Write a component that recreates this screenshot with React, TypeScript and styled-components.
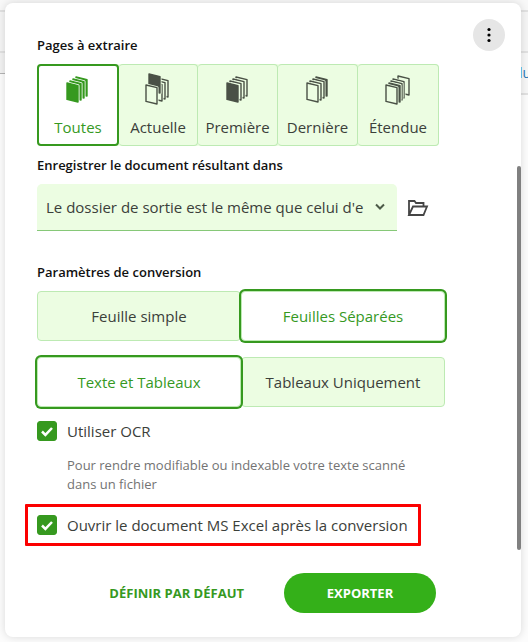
import React from "react";
import styled, { createGlobalStyle, css } from "styled-components";

const green = "#36991f";
const mint = "#ecfde2";
const mintEdge = "#bdeab3";
const ink = "#3b403a";
const sans = '"Open Sans", "Noto Sans", sans-serif';

const GlobalStyle = createGlobalStyle`
  *, *::before, *::after { box-sizing: border-box; }
  body { margin: 0; background: #fcfcfc; font-family: ${sans}; color: ${ink}; }
  button, select, input { font: inherit; color: inherit; }
`;

const Screen = styled.div`
  display: grid;
  min-height: 100vh;
  overflow: hidden;
  > * { grid-area: 1 / 1; }
`;

const Backdrop = styled.div`
  display: flex;
  flex-direction: column;
  background: #fcfcfc;
`;

const Bar = styled.div<{ $height: number; $tone: string }>`
  height: ${(p) => p.$height}px;
  background: ${(p) => p.$tone};
  border-bottom: 2px solid #e1e1e1;
`;

const SplitBar = styled.div`
  display: flex;
  align-items: flex-start;
`;

const LeftPane = styled.div`
  flex: 1;
  height: 21px;
  background: #f2f2f2;
  border-bottom: 1px solid #b4b4b4;
`;

const RightPane = styled.div`
  flex: 1;
  height: 42px;
  background: #f7f7f7;
  border-bottom: 2px solid #e1e1e1;
  direction: rtl;
  font-size: 14px;
  line-height: 40px;
  color: #2a7ab8;
  span { margin-right: -3px; }
`;

const Dialog = styled.main`
  display: grid;
  grid-template-columns: 1fr 4px;
  margin: 3px 7px 5px 5px;
  background: #fff;
  border-radius: 8px;
  box-shadow: 0 0 8px rgba(0, 0, 0, 0.14);
`;

const Body = styled.div`
  display: flex;
  flex-direction: column;
  padding: 16px 12px 24px 32px;
`;

const Top = styled.div`
  display: flex;
  justify-content: space-between;
  align-items: flex-start;
`;

const PageSection = styled.section`
  flex: 0 1 402px;
  padding-top: 16px;
`;

const Section = styled.section<{ $gap: number }>`
  max-width: 408px;
  margin-top: ${(p) => p.$gap}px;
`;

const Heading = styled.h2`
  display: block;
  margin: 0 0 9px;
  font-size: 13px;
  font-weight: 600;
  line-height: 20px;
  color: #111;
`;

const MenuButton = styled.button`
  display: grid;
  place-items: center;
  flex: none;
  width: 32px;
  height: 32px;
  padding: 0;
  border: 0;
  border-radius: 50%;
  background: #e6e6e6;
`;

const Tabs = styled.div`
  display: grid;
  grid-template-columns: 82fr 79fr 80fr 80fr 81fr;
  background: ${mint};
  border-radius: 4px;
`;

const Tab = styled.button<{ $on?: boolean }>`
  display: flex;
  flex-direction: column;
  align-items: center;
  justify-content: space-between;
  height: 82px;
  padding: 8px 0 7px;
  border: 1px solid ${mintEdge};
  border-left-width: 0;
  border-radius: 4px;
  background: transparent;
  font-size: 15px;
  line-height: 22px;
  ${(p) =>
    p.$on &&
    css`
      padding: 7px 0 6px;
      border: 2px solid ${green};
      background: #fff;
      color: ${green};
    `}
`;

const FolderRow = styled.div`
  display: flex;
  align-items: center;
  gap: 10px;
`;

const SelectBox = styled.div`
  position: relative;
  flex: 0 1 360px;
  min-width: 0;
  svg {
    position: absolute;
    right: 11px;
    top: 18px;
    pointer-events: none;
  }
`;

const Select = styled.select`
  appearance: none;
  display: block;
  width: 100%;
  height: 47px;
  padding: 0 28px 0 9px;
  border: 0;
  border-bottom: 1px solid #86c878;
  border-radius: 5px 5px 0 0;
  background: ${mint};
  font-size: 15px;
`;

const IconButton = styled.button`
  display: grid;
  padding: 0;
  border: 0;
  background: none;
`;

const Pair = styled.div`
  display: grid;
  grid-template-columns: 1fr 1fr;
  & + & { margin-top: 16px; }
`;

const Choice = styled.button<{ $on?: boolean }>`
  height: 50px;
  padding: 0;
  border: 1px solid ${mintEdge};
  border-radius: 4px;
  background: ${mint};
  font-size: 15px;
  ${(p) =>
    p.$on &&
    css`
      z-index: 1;
      background: #fff;
      color: ${green};
      box-shadow: 0 0 0 2px ${green};
    `}
`;

const Check = styled.label`
  display: flex;
  align-items: center;
  gap: 10px;
  font-size: 15px;
  line-height: 20px;
`;

const OcrCheck = styled(Check)`
  margin-top: 14px;
`;

const Tick = styled.input`
  appearance: none;
  flex: none;
  width: 20px;
  height: 20px;
  margin: 0;
  border-radius: 3px;
  background: #fff;
  border: 1px solid ${green};
  &:checked {
    background: ${green}
      url("data:image/svg+xml,%3Csvg xmlns='http://www.w3.org/2000/svg' viewBox='0 0 20 20'%3E%3Cpath d='M5 10.5l3.4 3.4L15 7' fill='none' stroke='white' stroke-width='2.5'/%3E%3C/svg%3E")
      center / 20px;
  }
`;

const Hint = styled.p`
  max-width: 390px;
  margin: 15px 0 0;
  padding-left: 30px;
  font-size: 13px;
  line-height: 19px;
  color: #737373;
`;

const Highlight = styled.div`
  align-self: flex-start;
  margin: 10px 0 0 -12px;
  padding: 8px 10px 8px 9px;
  border: 3px solid #fb0000;
  border-radius: 1px;
`;

const Actions = styled.div`
  display: flex;
  justify-content: flex-end;
  align-items: center;
  gap: 40px;
  margin: 27px 69px 0 0;
`;

const TextButton = styled.button`
  padding: 0;
  border: 0;
  background: none;
  font-size: 13px;
  font-weight: 700;
  color: ${green};
`;

const ExportButton = styled.button`
  width: 152px;
  height: 40px;
  border: 0;
  border-radius: 20px;
  background: #34b019;
  font-size: 13px;
  font-weight: 700;
  color: #fff;
`;

const Thumb = styled.div`
  height: 384px;
  margin-top: 163px;
  border-radius: 2px;
  background: #808080;
`;

type Sheet = [x: number, y: number, solid: boolean];

const sheets: Record<string, Sheet[]> = {
  all: [[11, 4, true], [8, 6, true], [5, 8, true], [2, 10, true]],
  current: [[12, 5, false], [9, 7, false], [6, 9, false], [4, 1, true], [1, 12, false]],
  first: [[11, 4, false], [8, 6, false], [5, 8, false], [2, 10, true]],
  last: [[11, 4, true], [8, 6, false], [5, 8, false], [2, 10, false]],
  range: [[13, 3, false], [8, 6, false], [6, 8, false], [4, 10, true], [1, 12, false]],
};

function Sheets({ kind, on }: { kind: string; on?: boolean }) {
  const color = on ? green : "#4a5146";
  const paper = on ? "#fff" : mint;
  return (
    <svg width="26" height="34" viewBox="0 0 26 34" aria-hidden="true">
      {sheets[kind].map(([x, y, solid], i) => {
        const d = `M${x} ${y}l11 2.6v16.4l-11 -2.6z`;
        return (
          <g key={i} strokeLinejoin="round">
            <path d={d} fill={paper} stroke={paper} strokeWidth="3" />
            <path d={d} fill={solid ? color : paper} stroke={color} strokeWidth="1.4" />
          </g>
        );
      })}
    </svg>
  );
}

const pageTabs = [
  ["all", "Toutes"],
  ["current", "Actuelle"],
  ["first", "Première"],
  ["last", "Dernière"],
  ["range", "Étendue"],
];

export default function App() {
  return (
    <>
      <GlobalStyle />
      <Screen>
        <Backdrop>
          <Bar $height={12} $tone="#f8f8f8" />
          <Bar $height={41} $tone="#f5f5f5" />
          <SplitBar>
            <LeftPane />
            <RightPane>
              <span>lu</span>
            </RightPane>
          </SplitBar>
        </Backdrop>
        <Dialog>
          <Body>
            <Top>
              <PageSection>
                <Heading>Pages à extraire</Heading>
                <Tabs>
                  {pageTabs.map(([kind, label]) => (
                    <Tab key={kind} type="button" $on={kind === "all"} aria-pressed={kind === "all"}>
                      <Sheets kind={kind} on={kind === "all"} />
                      {label}
                    </Tab>
                  ))}
                </Tabs>
              </PageSection>
              <MenuButton type="button" aria-label="Menu">
                <svg width="4" height="16" viewBox="0 0 4 16">
                  <circle cx="2" cy="2.5" r="1.6" />
                  <circle cx="2" cy="8" r="1.6" />
                  <circle cx="2" cy="13.5" r="1.6" />
                </svg>
              </MenuButton>
            </Top>
            <Section $gap={9}>
              <Heading as="label" htmlFor="folder">
                Enregistrer le document résultant dans
              </Heading>
              <FolderRow>
                <SelectBox>
                  <Select id="folder">
                    <option>Le dossier de sortie est le même que celui d'e</option>
                  </Select>
                  <svg width="12" height="10" viewBox="0 0 12 10" fill="none" stroke="#4c5a48" strokeWidth="2">
                    <path d="M2 2.5l4 4 4-4" />
                  </svg>
                </SelectBox>
                <IconButton type="button" aria-label="Parcourir">
                  <svg width="22" height="18" viewBox="0 0 22 18" fill="none" stroke="#454545" strokeWidth="1.8">
                    <path d="M2 16V2h5.5l1.5 2h7.5v3.5M2 16l4-8.5h14L16.5 16z" />
                  </svg>
                </IconButton>
              </FolderRow>
            </Section>
            <Section $gap={31}>
              <Heading>Paramètres de conversion</Heading>
              <Pair>
                <Choice type="button">Feuille simple</Choice>
                <Choice type="button" $on aria-pressed>Feuilles Séparées</Choice>
              </Pair>
              <Pair>
                <Choice type="button" $on aria-pressed>Texte et Tableaux</Choice>
                <Choice type="button">Tableaux Uniquement</Choice>
              </Pair>
            </Section>
            <OcrCheck>
              <Tick type="checkbox" defaultChecked />
              Utiliser OCR
            </OcrCheck>
            <Hint>Pour rendre modifiable ou indexable votre texte scanné dans un fichier</Hint>
            <Highlight>
              <Check>
                <Tick type="checkbox" defaultChecked />
                Ouvrir le document MS Excel après la conversion
              </Check>
            </Highlight>
            <Actions>
              <TextButton type="button">DÉFINIR PAR DÉFAUT</TextButton>
              <ExportButton type="button">EXPORTER</ExportButton>
            </Actions>
          </Body>
          <Thumb />
        </Dialog>
      </Screen>
    </>
  );
}
